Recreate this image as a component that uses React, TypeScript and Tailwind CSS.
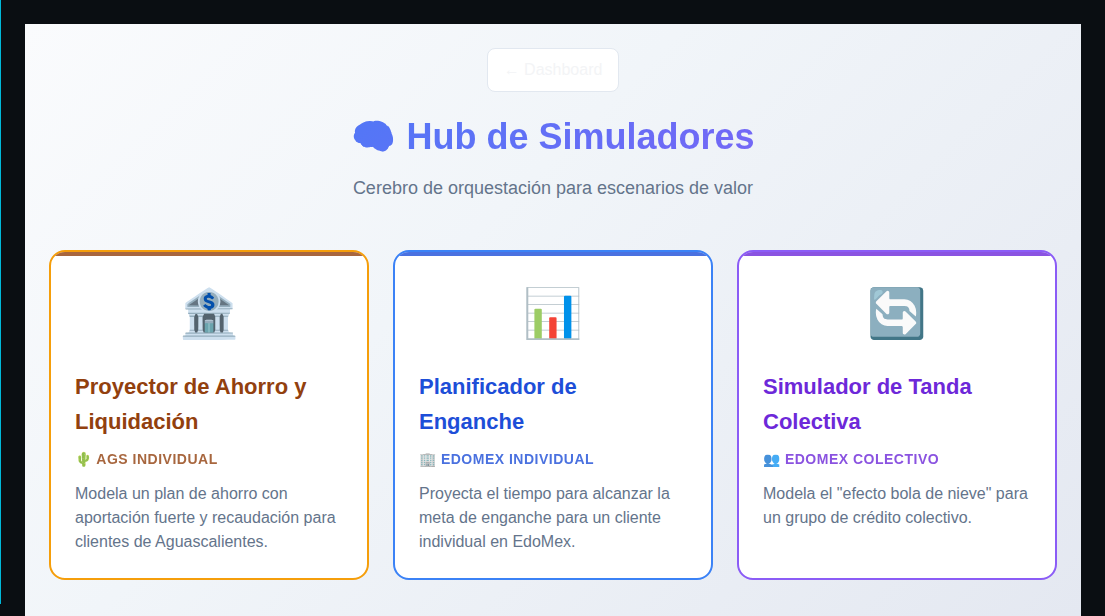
const cards = [
  { icon: "🏦", title: "Proyector de Ahorro y Liquidación", tag: "🌵 AGS INDIVIDUAL", text: "Modela un plan de ahorro con aportación fuerte y recaudación para clientes de Aguascalientes.", border: "border-[#f59e0b]", bar: "bg-[#92400e]", heading: "text-[#92400e]" },
  { icon: "📊", title: "Planificador de Enganche", tag: "🏢 EDOMEX INDIVIDUAL", text: "Proyecta el tiempo para alcanzar la meta de enganche para un cliente individual en EdoMex.", border: "border-[#3b82f6]", bar: "bg-[#1d4ed8]", heading: "text-[#1d4ed8]" },
  { icon: "🔄", title: "Simulador de Tanda Colectiva", tag: "👥 EDOMEX COLECTIVO", text: "Modela el \"efecto bola de nieve\" para un grupo de crédito colectivo.", border: "border-[#8b5cf6]", bar: "bg-[#6d28d9]", heading: "text-[#6d28d9]" },
];

export default function App() {
  return (
    <div className="relative min-h-screen bg-[#0a0e12] pt-6 pr-6 pl-[25px] font-['Liberation_Sans',Arial,sans-serif]">
      <div className="absolute top-0 bottom-3 left-0 w-px bg-[#00b8d9]" />
      <main className="min-h-[592px] bg-linear-135/srgb from-[#fafbfd] via-[#f1f5f9] via-40% to-[#e4e8f1] p-6">
        <header className="mb-12 text-center">
          <button type="button" className="h-11 rounded-lg border border-[#e2e8f0] bg-white px-4 text-base text-[#f3f4f6]">← Dashboard</button>
          <h1 className="mt-4 bg-linear-135/srgb from-[#3b82f6] to-[#8b5cf6] bg-clip-text text-4xl leading-[58px] font-bold text-transparent">🧠 Hub de Simuladores</h1>
          <p className="mt-2 text-lg text-[#64748b]">Cerebro de orquestación para escenarios de valor</p>
        </header>
        <section className="grid grid-cols-3 gap-6">
          {cards.map((c) => (
            <a key={c.title} href="#simulador" className={`overflow-hidden rounded-2xl border-2 bg-white ${c.border}`}>
              <div className={`h-1 opacity-80 ${c.bar}`} />
              <div className="px-6 pt-5 pb-6">
                <div className="mb-[17px] text-center text-5xl leading-[76px]">{c.icon}</div>
                <h2 className={`mb-2 text-[22px] leading-[35px] font-bold ${c.heading}`}>{c.title}</h2>
                <p className={`mb-[11px] text-sm leading-6 font-semibold tracking-[0.5px] opacity-80 ${c.heading}`}>{c.tag}</p>
                <p className="text-base text-[#64748b]">{c.text}</p>
              </div>
            </a>
          ))}
        </section>
      </main>
    </div>
  );
}
